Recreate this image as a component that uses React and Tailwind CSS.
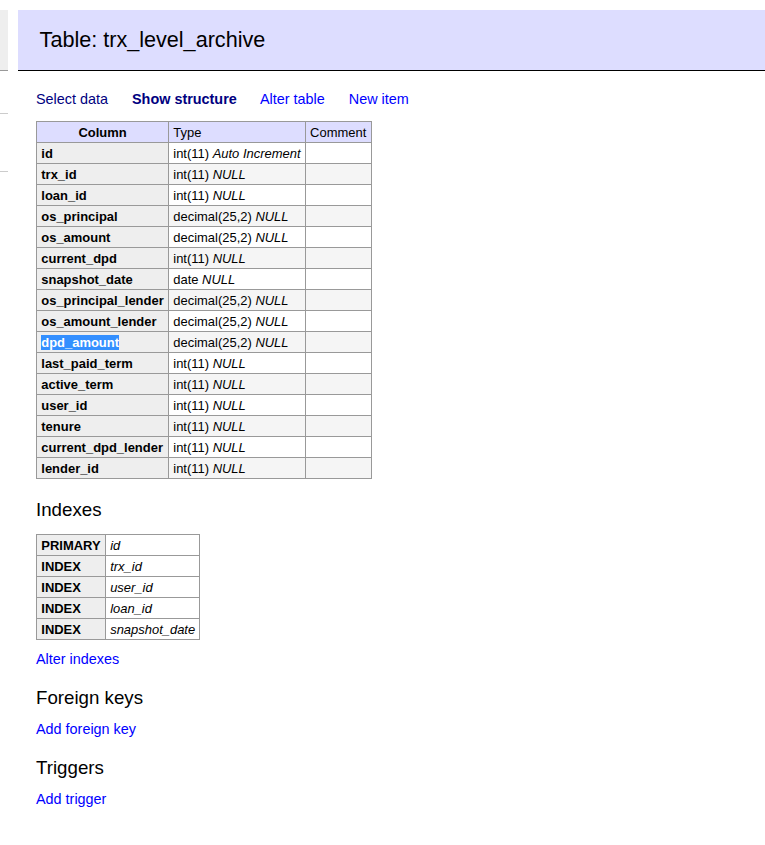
import React from 'react';

const COLUMNS = [
  ['id', 'int(11)', 'Auto Increment'],
  ['trx_id', 'int(11)', 'NULL'],
  ['loan_id', 'int(11)', 'NULL'],
  ['os_principal', 'decimal(25,2)', 'NULL'],
  ['os_amount', 'decimal(25,2)', 'NULL'],
  ['current_dpd', 'int(11)', 'NULL'],
  ['snapshot_date', 'date', 'NULL'],
  ['os_principal_lender', 'decimal(25,2)', 'NULL'],
  ['os_amount_lender', 'decimal(25,2)', 'NULL'],
  ['dpd_amount', 'decimal(25,2)', 'NULL'],
  ['last_paid_term', 'int(11)', 'NULL'],
  ['active_term', 'int(11)', 'NULL'],
  ['user_id', 'int(11)', 'NULL'],
  ['tenure', 'int(11)', 'NULL'],
  ['current_dpd_lender', 'int(11)', 'NULL'],
  ['lender_id', 'int(11)', 'NULL'],
];

const INDEXES = [
  ['PRIMARY', 'id'],
  ['INDEX', 'trx_id'],
  ['INDEX', 'user_id'],
  ['INDEX', 'loan_id'],
  ['INDEX', 'snapshot_date'],
];

const cell = 'border border-[#999] px-[4.3px] py-[2.5px] text-left align-top whitespace-nowrap leading-[15px]';

export default function App() {
  return (
    <div className="flex min-h-[845px] bg-white text-black text-[14.4px] leading-[1.25]" style={{ fontFamily: '"Liberation Sans", Arial, sans-serif' }}>
      {/* Sidebar remnant */}
      <div className="w-[8px] shrink-0 flex flex-col">
        <div className="mt-[10px] h-[61px] bg-[#eee] border-b border-[#999]" />
        <div className="mt-[42px] border-t border-[#ccc]" />
        <div className="mt-[57px] border-t border-[#ccc]" />
      </div>

      {/* Content */}
      <div className="flex-1 ml-[10px] pt-[10px]">
        <h2 className="bg-[#ddf] border-b border-black px-[21.6px] pt-[15.5px] pb-[17.5px] text-[21.6px] leading-[27px] font-normal">
          Table: trx_level_archive
        </h2>

        <div className="pl-[18px]">
          <p className="mt-[19px] leading-[18px] whitespace-nowrap">
            <a href="#" className="text-[#000080] mr-[20px]">Select data</a>{' '}
            <a href="#" className="text-[#000080] font-bold mr-[20px]">Show structure</a>{' '}
            <a href="#" className="text-[#00f] mr-[20px]">Alter table</a>{' '}
            <a href="#" className="text-[#00f]">New item</a>
          </p>

          <table className="mt-[13px] border-collapse text-[12.96px]">
            <thead>
              <tr className="bg-[#ddf]">
                <th className={`${cell} !text-center font-bold`}>Column</th>
                <td className={cell}>Type</td>
                <td className={cell}>Comment</td>
              </tr>
            </thead>
            <tbody>
              {COLUMNS.map(([name, type, extra], i) => (
                <tr key={name} className={i % 2 === 1 ? 'bg-[#f5f5f5]' : 'bg-white'}>
                  <th className={`${cell} bg-[#eee] font-bold`}>
                    {name === 'dpd_amount' ? (
                      <span className="bg-[#338fff] text-white">{name}</span>
                    ) : name}
                  </th>
                  <td className={cell}>
                    {type} <i>{extra}</i>
                  </td>
                  <td className={cell}></td>
                </tr>
              ))}
            </tbody>
          </table>

          <h3 className="mt-[18.7px] text-[18.72px] leading-[23.4px] font-normal">Indexes</h3>
          <table className="mt-[13px] border-collapse text-[12.96px]">
            <tbody>
              {INDEXES.map(([kind, col]) => (
                <tr key={col}>
                  <th className={`${cell} bg-[#eee] font-bold`}>{kind}</th>
                  <td className={`${cell} italic`}>{col}</td>
                </tr>
              ))}
            </tbody>
          </table>
          <p className="mt-[9.5px] leading-[18px]">
            <a href="#" className="text-[#00f]">Alter indexes</a>
          </p>

          <h3 className="mt-[18px] text-[18.72px] leading-[23.4px] font-normal">Foreign keys</h3>
          <p className="mt-[11px] leading-[18px]">
            <a href="#" className="text-[#00f]">Add foreign key</a>
          </p>

          <h3 className="mt-[18px] text-[18.72px] leading-[23.4px] font-normal">Triggers</h3>
          <p className="mt-[11px] leading-[18px]">
            <a href="#" className="text-[#00f]">Add trigger</a>
          </p>
        </div>
      </div>
    </div>
  );
}
